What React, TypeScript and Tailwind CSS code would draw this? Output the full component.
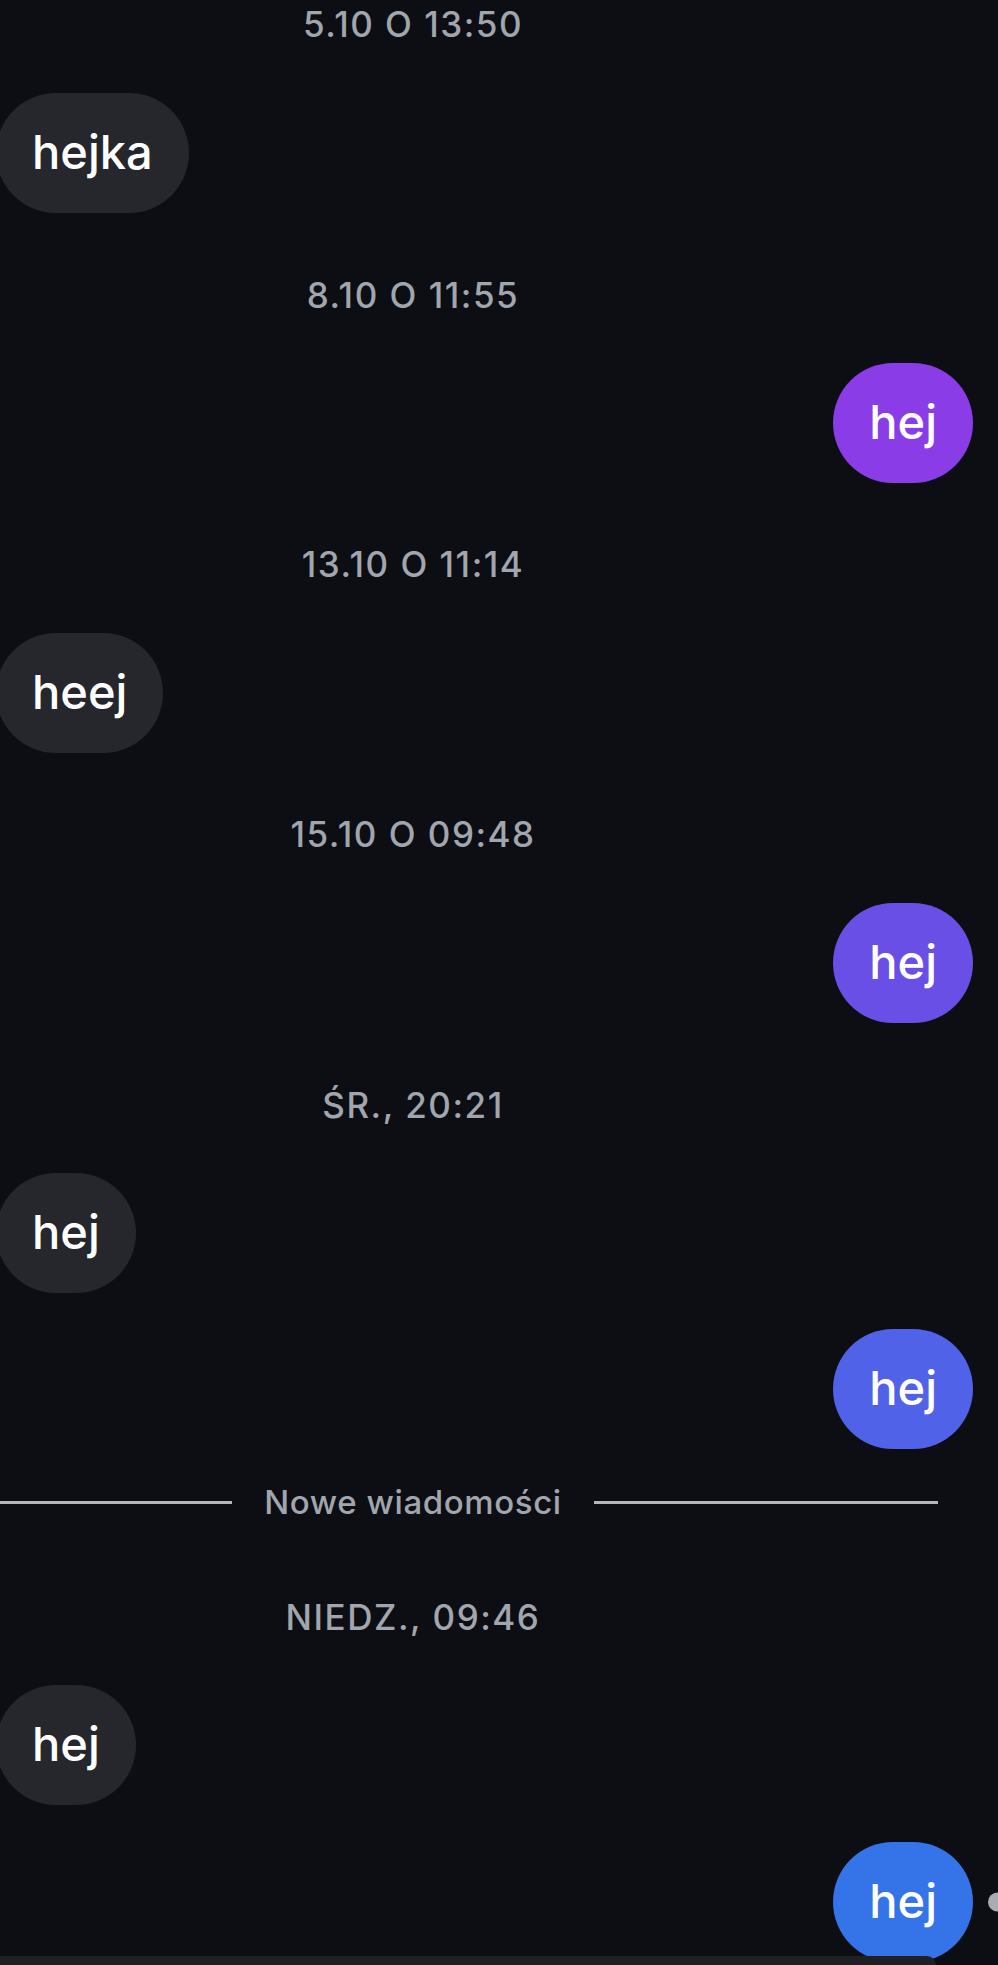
type Item =
   | { kind: 'time'; text: string; mt: string }
   | { kind: 'in'; text: string; mt: string }
   | { kind: 'out'; text: string; mt: string; color: string; seen?: boolean }
   | { kind: 'divider'; text: string; mt: string }

const items: Item[] = [
   { kind: 'time', text: '5.10 o 13:50', mt: 'mt-[4px]' },
   { kind: 'in', text: 'hejka', mt: 'mt-[49px]' },
   { kind: 'time', text: '8.10 o 11:55', mt: 'mt-[62px]' },
   { kind: 'out', text: 'hej', mt: 'mt-[48px]', color: 'bg-[#8a3de6]' },
   { kind: 'time', text: '13.10 o 11:14', mt: 'mt-[61px]' },
   { kind: 'in', text: 'heej', mt: 'mt-[49px]' },
   { kind: 'time', text: '15.10 o 09:48', mt: 'mt-[61px]' },
   { kind: 'out', text: 'hej', mt: 'mt-[49px]', color: 'bg-[#6a4fe6]' },
   { kind: 'time', text: 'śr., 20:21', mt: 'mt-[62px]' },
   { kind: 'in', text: 'hej', mt: 'mt-[48px]' },
   { kind: 'out', text: 'hej', mt: 'mt-[36px]', color: 'bg-[#5063e8]' },
   { kind: 'divider', text: 'Nowe wiadomości', mt: 'mt-[33px]' },
   { kind: 'time', text: 'niedz., 09:46', mt: 'mt-[75px]' },
   { kind: 'in', text: 'hej', mt: 'mt-[48px]' },
   { kind: 'out', text: 'hej', mt: 'mt-[37px]', color: 'bg-[#3574e8]', seen: true },
]

function Timestamp({ text, mt }: { text: string; mt: string }) {
   return (
      <div
         className={`${mt} w-[826px] h-[40px] text-center text-[35px] leading-[40px] font-medium tracking-[1.5px] uppercase text-[#a1a5ae]`}
      >
         {text}
      </div>
   )
}

function Bubble({ text, className }: { text: string; className: string }) {
   return (
      <div
         className={`h-[120px] px-9 pb-[3px] rounded-full flex items-center text-[47px] leading-none font-medium text-white ${className}`}
      >
         {text}
      </div>
   )
}

export default function App() {
   return (
      <div
         className="relative h-[1965px] w-full overflow-hidden bg-[#0c0e13]"
         style={{ fontFamily: 'Inter, "Noto Sans", sans-serif' }}
      >
         <div className="flex flex-col">
            {items.map((item, i) => {
               if (item.kind === 'time') return <Timestamp key={i} text={item.text} mt={item.mt} />
               if (item.kind === 'in')
                  return (
                     <div key={i} className={`${item.mt} flex -ml-1`}>
                        <Bubble text={item.text} className="bg-[#25272d]" />
                     </div>
                  )
               if (item.kind === 'divider')
                  return (
                     <div
                        key={i}
                        className={`${item.mt} -ml-[112px] w-[1050px] h-[40px] flex items-center gap-8`}
                     >
                        <div className="flex-1 h-[3px] bg-[#b3b6bd]" />
                        <span className="text-[33px] leading-[40px] font-medium tracking-[0.6px] text-[#a1a5ae]">
                           {item.text}
                        </span>
                        <div className="flex-1 h-[3px] bg-[#b3b6bd]" />
                     </div>
                  )
               return (
                  <div key={i} className={`${item.mt} relative flex justify-end pr-[25px]`}>
                     <Bubble text={item.text} className={item.color} />
                     {item.seen && (
                        <div className="absolute -right-[9px] top-1/2 -translate-y-1/2 w-[19px] h-[19px] rounded-full bg-[#a9acb3]" />
                     )}
                  </div>
               )
            })}
         </div>
         <div className="absolute bottom-0 left-0 w-[936px] h-[9px] rounded-tr-xl bg-[#1f2023]" />
      </div>
   )
}
